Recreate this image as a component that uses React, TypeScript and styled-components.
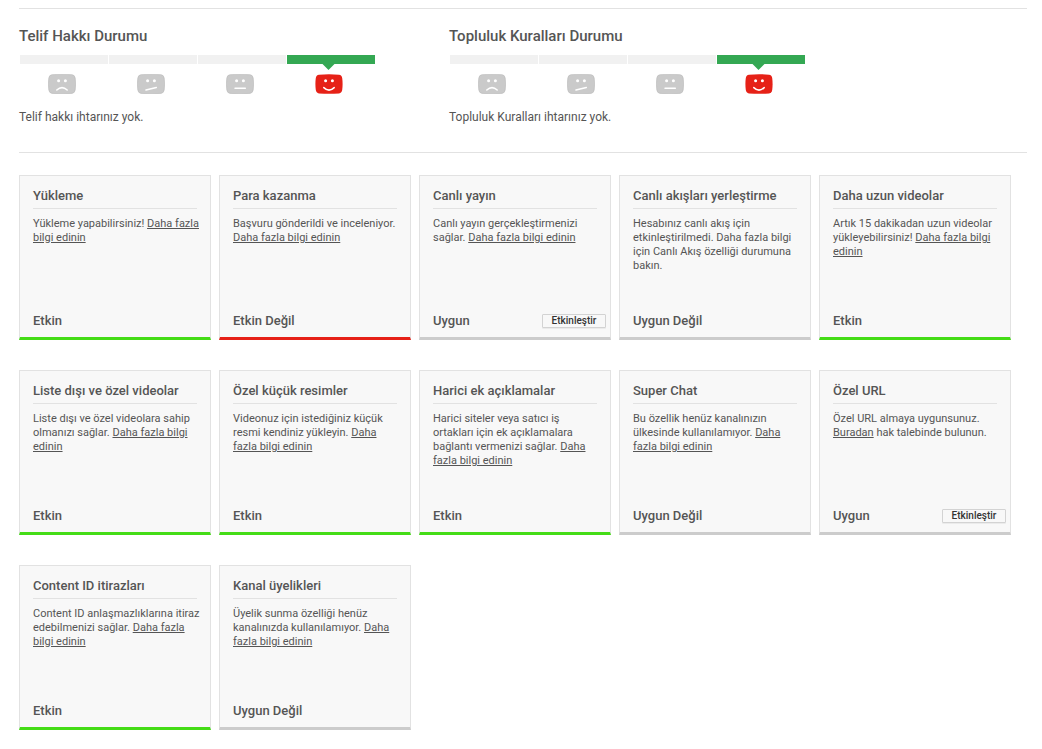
import React from "react";
import styled, { createGlobalStyle } from "styled-components";

const GlobalStyle = createGlobalStyle`
  *, *::before, *::after { box-sizing: border-box; }
  body {
    margin: 0;
    background: #fff;
    color: #555;
    font-family: Roboto, Arial, sans-serif;
    font-size: 12px;
  }
  h2, h3, p { margin: 0; }
`;

const Page = styled.main`
  padding: 8px 15px 16px 19px;
`;

const StatusBar = styled.div`
  display: flex;
  flex-wrap: wrap;
  gap: 24px 74px;
  padding: 17px 0 27px;
  border: solid #e2e2e2;
  border-width: 1px 0;
`;

const StatusPanel = styled.section`
  width: 356px;
`;

const StatusTitle = styled.h2`
  font-size: 15px;
  font-weight: 500;
  line-height: 20px;
`;

const Meter = styled.div`
  display: grid;
  grid-template-columns: repeat(4, 1fr);
  gap: 1px;
  margin-top: 9px;
  padding-left: 1px;
`;

const Segment = styled.span<{ $active?: boolean }>`
  height: 9px;
  background: ${(p) => (p.$active ? "#34a853" : "#f1f1f1")};
`;

const Faces = styled.div`
  display: flex;
  gap: 61px;
  padding-left: 29px;
`;

const FaceCell = styled.div`
  display: flex;
  flex-direction: column;
  align-items: center;
  justify-content: flex-end;
  gap: 4px;
  width: 28px;
  height: 30px;

  svg { display: block; }
`;

const StatusText = styled.p`
  margin-top: 15px;
  font-size: 12px;
  line-height: 16px;
`;

const CardGrid = styled.div`
  display: grid;
  grid-template-columns: repeat(auto-fill, 192px);
  gap: 30px 8px;
  padding-top: 22px;
`;

type Tone = "green" | "red" | "grey";
const toneColors: Record<Tone, string> = {
  green: "#44dc16",
  red: "#e62117",
  grey: "#cccccc",
};

const CardBox = styled.article<{ $tone: Tone }>`
  display: flex;
  flex-direction: column;
  min-height: 165px;
  padding: 10px 13px 9px;
  background: #f8f8f8;
  border: 1px solid #e2e2e2;
  border-bottom: 3px solid ${(p) => toneColors[p.$tone]};
`;

const CardTitle = styled.h3`
  padding-bottom: 3px;
  border-bottom: 1px solid #e2e2e2;
  font-size: 13px;
  font-weight: 500;
  line-height: 19px;
`;

const CardText = styled.p`
  margin: 8px -4px 0 0;
  font-size: 11px;
  line-height: 14px;
`;

const CardFooter = styled.footer`
  display: flex;
  align-items: flex-end;
  justify-content: space-between;
  margin: auto -9px 0 0;
  font-size: 13px;
  font-weight: 500;
  line-height: 15px;
`;

const TextLink = styled.a`
  color: inherit;
  text-decoration: underline;
`;

const EnableButton = styled.button`
  width: 64px;
  height: 14px;
  padding: 0;
  border: 1px solid #d3d3d3;
  border-radius: 1px;
  background: #f8f8f8;
  box-shadow: 0 1px 0 rgba(0, 0, 0, 0.05);
  color: #333;
  font-family: Roboto, Arial, sans-serif;
  font-size: 10px;
  font-weight: 500;
  line-height: 12px;
  cursor: pointer;
`;

const mouths = {
  sad: "M8.8 16 Q14 11.2 19.2 16",
  unsure: "M9 16 L19.3 13.6",
  neutral: "M9 14.3 H19.3",
  happy: "M8.8 13.6 Q14 18.6 19.2 13.6",
};
type Mood = keyof typeof mouths;
const moods: Mood[] = ["sad", "unsure", "neutral", "happy"];

function Face({ mood }: { mood: Mood }) {
  const active = mood === "happy";
  return (
    <svg width="28" height="20" viewBox="0 0 28 20" aria-hidden="true">
      <path
        d="M4 .7 Q14 -.3 24 .7 Q26.8 1 27.2 4 Q28 10 27.2 16 Q26.8 19 24 19.4 Q14 20.2 4 19.4 Q1.2 19 .8 16 Q0 10 .8 4 Q1.2 1 4 .7Z"
        fill={active ? "#e62117" : "#cacaca"}
        stroke={active ? "none" : "#b8b8b8"}
        strokeWidth=".6"
      />
      <circle cx="10.6" cy="6.8" r="1.5" fill="#fff" />
      <circle cx="17.4" cy="6.8" r="1.5" fill="#fff" />
      <path d={mouths[mood]} fill="none" stroke="#fff" strokeWidth="1.5" strokeLinecap="round" />
    </svg>
  );
}

function Status({ title, text }: { title: string; text: string }) {
  return (
    <StatusPanel>
      <StatusTitle>{title}</StatusTitle>
      <Meter>
        {moods.map((mood) => (
          <Segment key={mood} $active={mood === "happy"} />
        ))}
      </Meter>
      <Faces>
        {moods.map((mood) => (
          <FaceCell key={mood}>
            {mood === "happy" && (
              <svg width="14" height="6" viewBox="0 0 14 6" aria-hidden="true">
                <path d="M.5 0 H12.5 L6.5 6Z" fill="#34a853" />
              </svg>
            )}
            <Face mood={mood} />
          </FaceCell>
        ))}
      </Faces>
      <StatusText>{text}</StatusText>
    </StatusPanel>
  );
}

interface Feature {
  title: string;
  text: string;
  link?: string;
  after?: string;
  status: string;
  tone: Tone;
  action?: boolean;
}

const MORE = "Daha fazla bilgi edinin";

const features: Feature[] = [
  { title: "Yükleme", text: "Yükleme yapabilirsiniz! ", link: MORE, status: "Etkin", tone: "green" },
  { title: "Para kazanma", text: "Başvuru gönderildi ve inceleniyor. ", link: MORE, status: "Etkin Değil", tone: "red" },
  { title: "Canlı yayın", text: "Canlı yayın gerçekleştirmenizi sağlar. ", link: MORE, status: "Uygun", tone: "grey", action: true },
  { title: "Canlı akışları yerleştirme", text: "Hesabınız canlı akış için etkinleştirilmedi. Daha fazla bilgi için Canlı Akış özelliği durumuna bakın.", status: "Uygun Değil", tone: "grey" },
  { title: "Daha uzun videolar", text: "Artık 15 dakikadan uzun videolar yükleyebilirsiniz! ", link: MORE, status: "Etkin", tone: "green" },
  { title: "Liste dışı ve özel videolar", text: "Liste dışı ve özel videolara sahip olmanızı sağlar. ", link: MORE, status: "Etkin", tone: "green" },
  { title: "Özel küçük resimler", text: "Videonuz için istediğiniz küçük resmi kendiniz yükleyin. ", link: MORE, status: "Etkin", tone: "green" },
  { title: "Harici ek açıklamalar", text: "Harici siteler veya satıcı iş ortakları için ek açıklamalara bağlantı vermenizi sağlar. ", link: MORE, status: "Etkin", tone: "green" },
  { title: "Super Chat", text: "Bu özellik henüz kanalınızın ülkesinde kullanılamıyor. ", link: MORE, status: "Uygun Değil", tone: "grey" },
  { title: "Özel URL", text: "Özel URL almaya uygunsunuz. ", link: "Buradan", after: " hak talebinde bulunun.", status: "Uygun", tone: "grey", action: true },
  { title: "Content ID itirazları", text: "Content ID anlaşmazlıklarına itiraz edebilmenizi sağlar. ", link: MORE, status: "Etkin", tone: "green" },
  { title: "Kanal üyelikleri", text: "Üyelik sunma özelliği henüz kanalınızda kullanılamıyor. ", link: MORE, status: "Uygun Değil", tone: "grey" },
];

function FeatureCard({ feature }: { feature: Feature }) {
  return (
    <CardBox $tone={feature.tone}>
      <CardTitle>{feature.title}</CardTitle>
      <CardText>
        {feature.text}
        {feature.link && <TextLink href="#">{feature.link}</TextLink>}
        {feature.after}
      </CardText>
      <CardFooter>
        <span>{feature.status}</span>
        {feature.action && <EnableButton type="button">Etkinleştir</EnableButton>}
      </CardFooter>
    </CardBox>
  );
}

export default function App() {
  return (
    <>
      <GlobalStyle />
      <Page>
        <StatusBar>
          <Status title="Telif Hakkı Durumu" text="Telif hakkı ihtarınız yok." />
          <Status title="Topluluk Kuralları Durumu" text="Topluluk Kuralları ihtarınız yok." />
        </StatusBar>
        <CardGrid>
          {features.map((feature) => (
            <FeatureCard key={feature.title} feature={feature} />
          ))}
        </CardGrid>
      </Page>
    </>
  );
}
